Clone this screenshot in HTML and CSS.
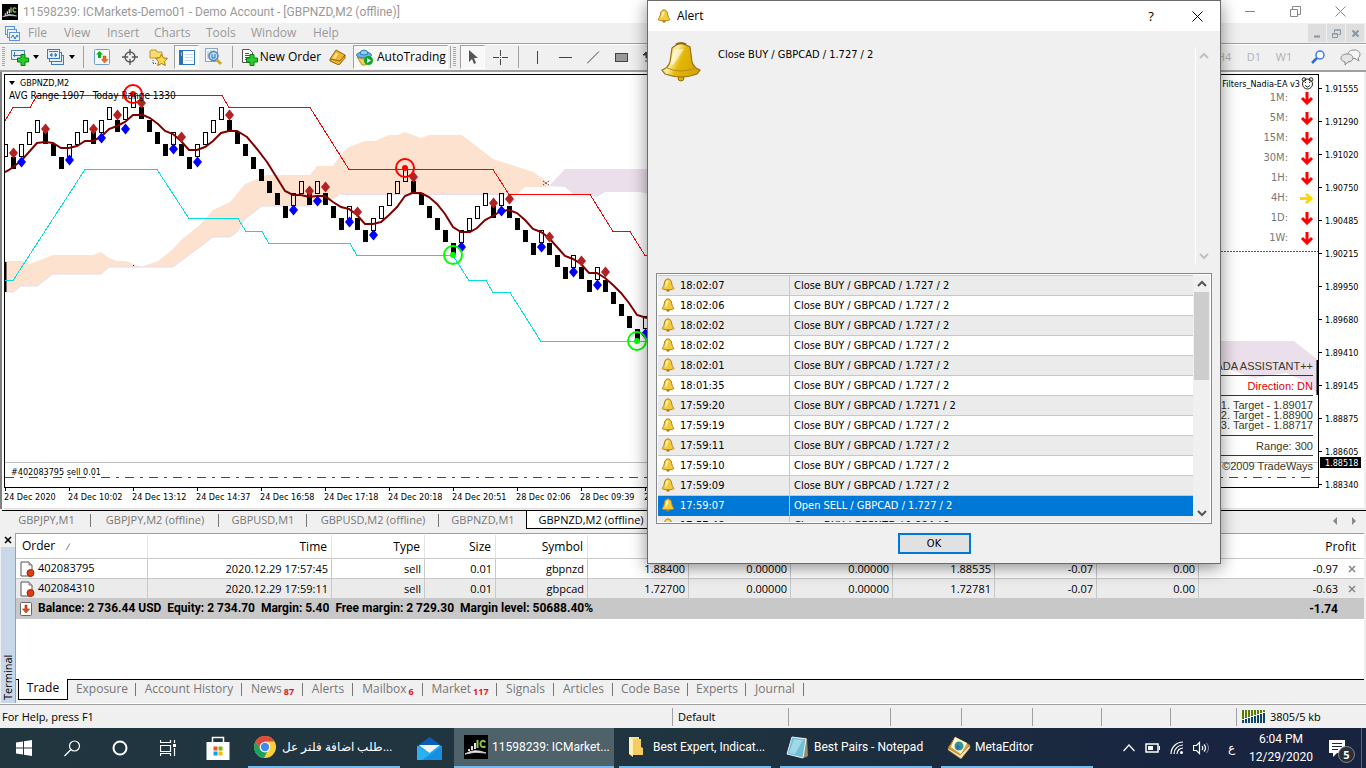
FILE: index.html
```html
<!DOCTYPE html>
<html lang="en">
<head>
<meta charset="utf-8">
<title>ICMarkets-Demo01 - GBPNZD,M2</title>
<link rel="stylesheet" href="styles.css">
</head>
<body>
<svg class="defs" aria-hidden="true">
  <defs>
    <linearGradient id="gold" x1="0" x2="1" y1="0" y2=".4"><stop offset="0" stop-color="#e8c42c"/><stop offset=".4" stop-color="#fbee9c"/><stop offset=".6" stop-color="#e3b708"/><stop offset="1" stop-color="#d9a800"/></linearGradient>
    <symbol id="bell" viewBox="0 0 40 40">
      <circle cx="20" cy="36" r="3" fill="#e0b000" stroke="#8f6a0e"/>
      <path d="M15 3Q20-1 25 3L29 5L31 20Q33 26 39 28L36 32Q20 38 4 32L1 28Q7 26 9 20L11 6Z" fill="url(#gold)" stroke="#9a7112" stroke-width="1.2"/>
      <path d="M6 26Q20 32 34 26" fill="none" stroke="#b88c14"/>
      <path d="M15 2.500Q20 0 25 2.500" fill="none" stroke="#8a620a" stroke-width="2"/>
      <path d="M13 8L23 7L13 22Q9 24 10 20Z" fill="#fff" opacity=".55"/>
    </symbol>
    <symbol id="smallbell" viewBox="0 0 14 14">
      <circle cx="7" cy="12.300" r="1.500" fill="#b07c10"/>
      <path d="M5 1.500Q7 .2 9 1.500Q10.500 2.500 10.800 6Q11 8.500 13 10.500Q12.500 11.800 7 11.800T1 10.500Q3 8.500 3.200 6Q3.500 2.500 5 1.500Z" fill="#f2cc3c" stroke="#b8861c"/>
      <path d="M6.500 2.500Q5 3 4.800 6.500L4 9.500Q6.500 8 7.500 2.500Z" fill="#fff6b8"/>
    </symbol>
    <symbol id="mt" viewBox="0 0 24 24">
      <rect width="24" height="24" fill="#000"/>
      <path d="M4 16v-2h2v2zM7 15v-4h2v4zM10 14V8h2v6z" fill="#ddd"/><path d="M1 19Q10 13 22 18Q11 16 1 19Z" fill="#fff" stroke="#ccc"/>
      <path d="M13.500 5v8M21.500 7q-4.500-3-5 1.500q0 5 5 3" fill="none" stroke="#8bc34a" stroke-width="2"/>
    </symbol>
    <symbol id="doc" viewBox="0 0 16 16">
      <path d="M2 1h8l3 3v11H2z" fill="#fff" stroke="#555"/><path d="M10 1v3h3" fill="#ddd" stroke="#777"/><circle cx="11.500" cy="12" r="3.500" fill="#e03c10" stroke="#a02808"/>
    </symbol>
    <symbol id="plus" viewBox="0 0 12 12"><path d="M4 .5h4V4h3.500v4H8v3.500H4V8H.5V4H4z" fill="#23cf26" stroke="#0a7d12"/></symbol>
    <symbol id="chev" viewBox="0 0 10 8"><path d="M1 6L5 2L9 6" fill="none" stroke="currentColor" stroke-width="2"/></symbol>
  </defs>
</svg>

<header class="titlebar">
  <svg class="i16"><use href="#mt"/></svg>
  <h1 class="title">11598239: ICMarkets-Demo01 - Demo Account - [GBPNZD,M2 (offline)]</h1>
  <div class="winctl">
    <button aria-label="Minimize"><svg width="11" height="11"><path d="M0 5.500h10" /></svg></button>
    <button aria-label="Restore"><svg width="11" height="11"><path d="M.5 3.500h7v7h-7zM2.500 3.500v-3h8v8h-3" /></svg></button>
    <button aria-label="Close"><svg width="11" height="11"><path d="M.5 .5l10 10M10.500 .5l-10 10" /></svg></button>
  </div>
</header>

<nav class="menubar">
  <svg class="i15" viewBox="0 0 15 15"><g fill="#eaf3ff" stroke="#5b93dc"><rect x=".5" y=".5" width="9" height="8"/><rect x="2.500" y="3.500" width="9" height="8"/><rect x="4.500" y="6.500" width="10" height="8"/></g><path d="M6 12l2-3 2 4 2-4 1 2" fill="none" stroke="#2b6cc4"/></svg>
  <button class="m-file">File</button><button class="m-view">View</button><button class="m-insert">Insert</button><button class="m-charts">Charts</button><button class="m-tools">Tools</button><button class="m-window">Window</button><button class="m-help">Help</button>
  <div class="childctl">
    <button aria-label="Minimize chart"><svg width="9" height="9"><path d="M1 7.500h6" stroke-width="2"/></svg></button>
    <button aria-label="Restore chart"><svg width="9" height="9"><path d="M.5 4.500h5v4h-5zM.5 5h5M2.500 3.500v-2.500h6v4.500h-2M2.500 1h6"/></svg></button>
    <button aria-label="Close chart"><svg width="9" height="9"><path d="M1.500 1.500l6 6M7.500 1.500l-6 6" stroke-width="2"/></svg></button>
  </div>
</nav>

<div class="toolbar">
  <span class="grip"></span>
  <button class="drop" aria-label="New chart"><svg width="18" height="17"><rect x=".5" y="1.500" width="13" height="9" fill="#e4f0fb" stroke="#4c86b8"/><path d="M3.500 3v5M2 6.500h9" stroke="#3a74a8" fill="none"/><use href="#plus" x="6" y="5" width="12" height="12"/></svg><span class="caret"></span></button>
  <button class="drop" aria-label="Profiles"><svg width="18" height="17"><g fill="#e4f0fb" stroke="#3f7bb4"><rect x="4.500" y="6.500" width="12" height="9"/><rect x="2.500" y="3.500" width="12" height="9"/><rect x=".5" y=".5" width="12" height="9"/></g><path d="M2 2.500h9M3 6l2-1.500v3zM10 6L8 4.500v3z" stroke="#3f7bb4" fill="#3f7bb4"/></svg><span class="caret"></span></button>
  <span class="sep"></span>
  <button class="tb" aria-label="Market Watch"><svg width="16" height="16"><rect x=".5" y=".5" width="15" height="15" rx="1" fill="#f4f9ff" stroke="#6fa0d0"/><path d="M5.500 2L9 5.500H7V9H4V5.500H2z" fill="#12ad1f"/><path d="M10.500 14L7.500 10.500H9V7h3v3.500h2z" fill="#f06a20" stroke="#b84408" stroke-width=".5"/></svg></button>
  <button class="tb" aria-label="Data Window"><svg width="16" height="16"><g fill="none" stroke="#555" stroke-width="1.300"><circle cx="8" cy="8" r="5"/><path d="M8 0v16M0 8h16"/></g><circle cx="8" cy="8" r="2" fill="#f0f0f0"/></svg></button>
  <button class="tb" aria-label="Navigator"><svg width="19" height="17"><path d="M1 2l1-1h5l1 2h5v6H1z" fill="#f7dc6c" stroke="#b79a34"/><path d="M4 11v4M4 14.500h4" stroke="#555" stroke-dasharray="1 1" fill="none"/><path d="M12.500 5l1.800 3.800 4.200.6-3 3 .8 4.100-3.800-2-3.800 2 .8-4.100-3-3 4.200-.6z" fill="#ffd84a" stroke="#a87c10"/></svg></button>
  <button class="tb on" aria-label="Terminal"><svg width="16" height="15"><rect x=".5" y=".5" width="15" height="14" fill="#fff" stroke="#2e75b5"/><rect x="1" y="1" width="3" height="13" fill="#2a6fb0"/><path d="M2 3h1M2 5h1" stroke="#fff"/><path d="M6 4.500h8M6 7.500h8M6 10.500h8" stroke="#c4dcf2"/></svg></button>
  <button class="tb" aria-label="Strategy Tester"><svg width="18" height="18"><rect x=".5" y=".5" width="12" height="13" fill="#f2f6fb" stroke="#8aa6c0"/><path d="M3 3v8M6 2v4M9 2v3" stroke="#9bb"/><circle cx="8.500" cy="8" r="4.500" fill="#bfe0fb" stroke="#4d84b8" stroke-width="1.500"/><path d="M7 6v4h3V6" fill="none" stroke="#2c6cae"/><path d="M12 12l4 4" stroke="#dba528" stroke-width="3"/></svg></button>
  <span class="sep"></span>
  <button class="order"><svg width="17" height="18"><path d="M1.500 1.500h7l3 3v10h-10z" fill="#fff" stroke="#555"/><path d="M4 5.500h4M4 7.500h5M4 9.500h5M4 11.500h2" stroke="#555"/><use href="#plus" x="5" y="6" width="12" height="12"/></svg><span>New Order</span></button>
  <button class="tb" aria-label="MetaEditor"><svg width="17" height="16"><path d="M1 10L7 1l9 5-5 9z" fill="#f0b52e" stroke="#93640f"/><path d="M1 10v2l9 4 6-7V6l-5 6z" fill="#f0b52e" stroke="#93640f"/><path d="M4 9l3-5 2 1-3 5z" fill="#ffe69a"/></svg></button>
  <button class="auto on"><svg width="18" height="17"><path d="M1 8q7 4 14 0l-5 8H6z" fill="#f4cf4c" stroke="#b8902a"/><ellipse cx="8" cy="6" rx="7.500" ry="3" fill="#67b4e6" stroke="#2f7fb5"/><path d="M4 5q0-4 4-4t4 4q-4 2-8 0z" fill="#8fcff4" stroke="#2f7fb5"/><circle cx="12.500" cy="11.500" r="4.500" fill="#0ba526"/><path d="M11 9l4 2.500-4 2.500z" fill="#fff"/></svg><span>AutoTrading</span></button>
  <span class="sep tight"></span><span class="grip"></span>
  <button class="tb on" aria-label="Cursor"><svg width="12" height="16"><path d="M2 1v12l3-3 2 5 2-1-2-5h4z" fill="#555"/></svg></button>
  <button class="tb" aria-label="Crosshair"><svg width="15" height="15"><path d="M7.500 0v6M7.500 9v6M0 7.500h6M9 7.500h6M7 7.500h1" stroke="#444"/></svg></button>
  <span class="sep"></span>
  <button class="tb" aria-label="Vertical line"><svg width="13" height="13"><path d="M6.500 0v13" stroke="#444"/></svg></button>
  <button class="tb" aria-label="Horizontal line"><svg width="13" height="13"><path d="M0 6.500h13" stroke="#444"/></svg></button>
  <button class="tb" aria-label="Trendline"><svg width="13" height="13"><path d="M0 12.500L12 .5" stroke="#444"/></svg></button>
  <button class="tb" aria-label="Rectangle"><svg width="13" height="13"><rect x=".5" y="2.500" width="12" height="8" fill="#999" stroke="#444"/></svg></button>
  <button class="tb" aria-label="Arrows"><svg width="13" height="13"><path d="M0 4l3-3 3 3zM3 4v3h4M2 10h9" stroke="#444" fill="#444"/></svg></button>
  <div class="periods"><button>H4</button><button>D1</button><button>W1</button>
    <button aria-label="Search"><svg width="14" height="14"><path d="M6 8l-5 5" stroke="#2a6cd8" stroke-width="2.500"/><circle cx="9" cy="5" r="4" fill="#fff" stroke="#3a7ae0" stroke-width="1.500"/></svg></button>
    <button aria-label="Community"><svg width="21" height="16"><path d="M14 1c4 0 6 2 6 4.500S18 9 18 9l1 3-4-2.500C10 10 8 8 8 5.500S10 1 14 1z" fill="#f6f6f6" stroke="#888"/><path d="M7 5c4 0 6 2 6 4s-2 4-5 4l-3 3v-3C2 12 1 11 1 9s2-4 6-4z" fill="#e4e4e4" stroke="#888"/></svg></button>
  </div>
</div>

<main class="chart">
  <div class="plot">
    <svg class="graph" id="graph" viewBox="5 75 1313 412" preserveAspectRatio="xMinYMin slice" role="img" aria-label="GBPNZD M2 price chart">
      <path d="M5 261L23 261L30 264L53 255L93 255L101 252L109 258L117 261L126 261L141 267L158 261L173 249L181 240L200 225L213 210L230 202L245 184L267 175L310 175L317 166L333 166L341 154L349 147L365 141L375 141L389 135L398 135L405 132L421 138L429 135L462 135L493 159L509 164L533 172L545 180L549 187L525 187L517 194L341 194L333 199L310 206L262 206L245 219L237 232L230 237L213 237L173 267L109 267L101 274L53 274L37 286L21 286L13 292L5 292Z" fill="#fce2cf"/>
      <path d="M549 186L565 169H660V194H648L640 192H605L597 197L589 194H573L565 187Z" fill="#eadfea"/>
      <path d="M5 292H13L21 286H37L53 274H101L109 267H173L213 237H230L237 232L245 219L262 206H310M341 194.500H517" fill="none" stroke="#e6dcec"/>
      <path d="M1200 341H1294L1318 360V394L1302 380L1286 373L1254 378L1220 366H1200Z" fill="#eadfea"/>
      <path d="M1200 251.500H1318" stroke="#555" stroke-dasharray="2 1"/>
      <path d="M5 462.500H1318" stroke="#c0c0c0"/>
      <path d="M5 477.500H1318" stroke="#008000" stroke-dasharray="9 6 3 6"/>
      <path d="M5.500 262V292M1317.500 360V395" stroke="#000" stroke-width="2"/>
      <g id="candles" shape-rendering="crispEdges"></g>
      <path d="M5 280.500H13L85 169.500H157L189 218.500H238L246 231.500H262L269 243.500H350L357 255.500H453L469 280.500H486L493 292.500H510L541 341.500H660" class="low"/>
      <path d="M5 121L13 107.500H30L37 95.500H222L229 107.500H310L349 169.500H493L509 194.500H590L613 231.500H630L645 255.500H660" class="high"/>
      <path d="M5 172L9 170L21 161L37 143L45 142L53 143L61 148L69 148L77 146L85 141L93 141L101 137L109 129L117 126L125 122L133 115L143 115L150 118L158 124L165 131L173 134L181 141L189 150L197 150L205 147L213 141L221 133L229 131L237 131L247 137L257 149L267 162L277 178L285 191L293 195L301 195L309 197L317 196L325 196L333 202L341 207L349 209L357 215L365 224L373 224L381 222L389 215L397 207L405 196L412 193L421 193L429 197L437 204L445 214L453 227L461 232L470 232L477 228L485 220L493 216L501 211L509 210L517 213L525 220L533 229L541 232L549 238L557 247L565 256L573 259L581 264L589 273L597 273L605 278L613 285L621 293L629 303L637 315L647 318L660 319" class="ma"/>
      <g id="marks"></g>
      <path d="M133.500 265v2M543 181l6 4M549 181l-6 4" stroke="#222" stroke-dasharray="1 1"/>
    </svg>
    <div class="plotinfo"><p><span class="caret"></span>GBPNZD,M2</p><p class="range"><span>AVG Range 1907</span><span>Today Range 1330</span></p></div>
    <p class="trade">#402083795 sell 0.01</p>
    <div class="signals">
      <p class="ea">Filters_Nadia-EA v3 <svg width="13" height="13"><g fill="none" stroke="#222"><circle cx="6.500" cy="7" r="5"/><circle cx="3" cy="2.500" r="1.800"/><circle cx="10" cy="2.500" r="1.800"/><path d="M4 5.500h1M8 5.500h1M4 8.500q2.500 3 5 0"/></g></svg></p>
      <dl id="signals"></dl>
    </div>
    <div class="assist">
      <p>WADA ASSISTANT++</p><p class="dn">Direction: DN</p>
      <ul><li>1. Target - 1.89017</li><li>2. Target - 1.88900</li><li>3. Target - 1.88717</li></ul>
      <p>Range: 300</p><p>©2009 TradeWays</p>
    </div>
  </div>
  <ol class="prices"><li>1.91555</li><li>1.91290</li><li>1.91020</li><li>1.90750</li><li>1.90485</li><li>1.90215</li><li>1.89950</li><li>1.89680</li><li>1.89410</li><li>1.89145</li><li>1.88875</li><li>1.88605</li><li>1.88340</li><li class="bid">1.88518</li></ol>
  <ol class="times"><li>24 Dec 2020</li><li>24 Dec 10:02</li><li>24 Dec 13:12</li><li>24 Dec 14:37</li><li>24 Dec 16:58</li><li>24 Dec 17:18</li><li>24 Dec 20:18</li><li>24 Dec 20:51</li><li>28 Dec 02:06</li><li>28 Dec 09:39</li><li>28 Dec</li></ol>
</main>

<nav class="charttabs">
  <button class="c1">GBPJPY,M1</button><button class="c2">GBPJPY,M2 (offline)</button><button class="c3">GBPUSD,M1</button><button class="c4">GBPUSD,M2 (offline)</button><button class="c5">GBPNZD,M1</button><button class="active">GBPNZD,M2 (offline)</button>
  <span class="arrows"><button aria-label="Scroll left"><svg width="5" height="8"><path d="M4 0v8L0 4z"/></svg></button><button aria-label="Scroll right"><svg width="5" height="8"><path d="M0 0v8l4-4z"/></svg></button></span>
</nav>

<section class="terminal">
  <aside class="side"><button aria-label="Close terminal"><svg width="8" height="8"><path d="M1 1l6 6M7 1l-6 6" stroke="#000" stroke-width="1.600"/></svg></button><h2>Terminal</h2></aside>
  <div class="panel">
    <table class="orders">
      <colgroup><col class="w-order"><col class="w-time"><col class="w-type"><col class="w-size"><col class="w-sym"><col class="w-price"><col class="w-num"><col class="w-num"><col class="w-num"><col class="w-num"><col class="w-num"><col></colgroup>
      <thead><tr><th>Order <i class="sort">∕</i></th><th>Time</th><th>Type</th><th>Size</th><th>Symbol</th><th></th><th></th><th></th><th></th><th></th><th></th><th class="profit">Profit</th></tr></thead>
      <tbody>
        <tr><td><svg class="i16"><use href="#doc"/></svg>402083795</td><td>2020.12.29 17:57:45</td><td>sell</td><td>0.01</td><td>gbpnzd</td><td>1.88400</td><td>0.00000</td><td>0.00000</td><td>1.88535</td><td>-0.07</td><td>0.00</td><td class="profit">-0.97<button aria-label="Close order 402083795"><svg width="8" height="8"><path d="M1 1l6 6M7 1l-6 6"/></svg></button></td></tr>
        <tr><td><svg class="i16"><use href="#doc"/></svg>402084310</td><td>2020.12.29 17:59:11</td><td>sell</td><td>0.01</td><td>gbpcad</td><td>1.72700</td><td>0.00000</td><td>0.00000</td><td>1.72781</td><td>-0.07</td><td>0.00</td><td class="profit">-0.63<button aria-label="Close order 402084310"><svg width="8" height="8"><path d="M1 1l6 6M7 1l-6 6"/></svg></button></td></tr>
      </tbody>
      <tfoot><tr><td colspan="11"><svg class="i16" viewBox="0 0 16 16"><rect x="1.500" y="1.500" width="11" height="13" rx="1" fill="#fff" stroke="#666"/><path d="M6 4h2v4h2.500L7 12 3.500 8H6z" fill="#e84a18" stroke="#a82c08" stroke-width=".6"/></svg><span>Balance: 2 736.44 USD</span><span>Equity: 2 734.70</span><span>Margin: 5.40</span><span>Free margin: 2 729.30</span><span>Margin level: 50688.40%</span></td><td class="profit">-1.74</td></tr></tfoot>
    </table>
    <nav class="tabs">
      <button class="active">Trade</button><button class="t1">Exposure</button><button class="t2">Account History</button><button class="t3">News<sub>87</sub></button><button class="t4">Alerts</button><button class="t5">Mailbox<sub>6</sub></button><button class="t6">Market<sub>117</sub></button><button class="t7">Signals</button><button class="t8">Articles</button><button class="t9">Code Base</button><button class="t10">Experts</button><button class="t11">Journal</button>
    </nav>
  </div>
</section>

<footer class="status"><span class="help">For Help, press F1</span><span class="s1">Default</span><span class="s2"></span><span class="s3"></span><span class="s3"></span><span class="s4"></span><span class="s4"></span><span class="s5"></span>
  <span class="net"><svg width="24" height="13" id="bars" aria-hidden="true"></svg>3805/5 kb</span></footer>

<footer class="taskbar">
  <button class="launch" aria-label="Start"><svg width="16" height="16"><path d="M0 2.500l7-1v6H0zM8 1.300L16 0v7.500H8zM0 8.500h7v6l-7-1zM8 8.500h8V16l-8-1.200z" fill="#fff"/></svg></button>
  <button class="launch" aria-label="Search"><svg width="17" height="17"><circle cx="10.500" cy="6" r="5" class="ln"/><path d="M7 9.500L.5 16" class="ln"/></svg></button>
  <button class="launch" aria-label="Cortana"><svg width="16" height="16"><circle cx="8" cy="8" r="6.500" fill="none" stroke="#fff" stroke-width="2"/></svg></button>
  <button class="launch" aria-label="Task View"><svg width="16" height="16"><path d="M.5 0v2.500h10V0M.5 5.500h10v6H.5zM.5 16v-2.500h10V16M14.500 0v3M14.500 8v8" class="ln"/><path d="M13 4h3v3h-3z" fill="#fff"/></svg></button>
  <button class="launch store" aria-label="Store"><svg width="24" height="25"><path d="M6.500 8V1.500h11V8" fill="none" stroke="#fff" stroke-width="1.500"/><path d="M.5 6h23v18H.5z" fill="#fff"/><path d="M7.500 10.500h4v4h-4z" fill="#f25022"/><path d="M12.500 10.500h4v4h-4z" fill="#7fba00"/><path d="M7.500 15.500h4v4h-4z" fill="#00a4ef"/><path d="M12.500 15.500h4v4h-4z" fill="#ffb900"/></svg></button>
  <button class="task chrome"><svg width="22" height="22" viewBox="0 0 22 22"><circle cx="11" cy="11" r="11" fill="#fdd03b"/><path d="M11 0A11 11 0 0 1 20.500 5.500H11L6.200 13.700 1.500 5.500A11 11 0 0 1 11 0z" fill="#dd4b3e"/><path d="M1.500 5.500L6.200 13.700 11 16.500 13 16 10 22A11 11 0 0 1 1.500 5.500z" fill="#1aa260"/><circle cx="11" cy="11" r="5.300" fill="#fff"/><circle cx="11" cy="11" r="4.200" fill="#4587f3"/></svg><span lang="ar" dir="ltr">طلب اضافة فلتر عل...</span></button>
  <button class="launch mail" aria-label="Mail"><svg width="25" height="23"><path d="M0 9L12.500 0 25 9z" fill="#0a5eb4"/><path d="M0 9h25v14H0z" fill="#28a8ea"/><path d="M2 8h21l-10.500 8z" fill="#f4f4f4"/><path d="M0 9l12.500 8L25 9v14H0z" fill="#2bb0f0"/><path d="M25 9L5 23h20z" fill="#1590e0"/></svg></button>
  <button class="task current"><svg width="24" height="24"><use href="#mt"/></svg><span>11598239: ICMarket...</span></button>
  <button class="task folder"><svg width="24" height="22"><path d="M4 1h10v17H4z" fill="#ffe08a"/><path d="M4 1l4 3v17l-4-3z" fill="#fff0b8"/><path d="M8 3h8v8l2 1v7H8z" fill="#f5cc62"/></svg><span>Best Expert, Indicat...</span></button>
  <button class="task"><svg width="23" height="23"><path d="M7 1l14 1 1 18-4 2z" fill="#9c8a6c"/><path d="M6 1l14 2-3 19-16-4z" fill="#6fc0d6" stroke="#e8f4f8"/><path d="M8 3l9 1-8 14-6-1z" fill="#b5e2ee" opacity=".7"/></svg><span>Best Pairs - Notepad</span></button>
  <button class="task editor"><svg width="25" height="23"><path d="M1 12L8 1l15 8-9 13z" fill="#d8a63c" stroke="#8c6418"/><path d="M4 11L8 1l12 6-6 11z" fill="#fff6dc"/><circle cx="12" cy="10" r="4.500" fill="#2f9a8c"/><path d="M10 8l4 4-5 1z" fill="#3465c0"/><path d="M1 12l12 7 10-10v3L14 23 1 14z" fill="#f4e2b0" stroke="#8c6418" stroke-width=".6"/></svg><span>MetaEditor</span></button>
  <div class="tray">
    <button aria-label="Hidden icons"><svg width="12" height="8"><path d="M.5 7L6 1l5.500 6" class="ln"/></svg></button>
    <button aria-label="Battery"><svg width="16" height="10"><path d="M1 1h12v8H1z" fill="none" stroke="#fff" stroke-width="1.500"/><path d="M3 3h5v4H3zM14 3h1v4h-1z" fill="#fff"/></svg></button>
    <button aria-label="Network"><svg width="14" height="14"><path d="M1 13A12 12 0 0 1 13 1M4 13A9 9 0 0 1 13 4M7 13A6 6 0 0 1 13 7" class="ln"/><circle cx="11.500" cy="11.500" r="1.500" fill="#fff"/></svg></button>
    <button aria-label="Volume"><svg width="17" height="14"><path d="M.5 4.500h3l3-3v11l-3-3h-3zM9 5q1.500 2 0 4M11 3.500q3 3.500 0 7" class="ln"/><path d="M13.500 2q4 5 0 10" fill="none" stroke="#889"/></svg></button>
    <button class="lang" lang="ar">ع</button>
    <button class="clock"><span>6:04 PM</span><span>12/29/2020</span></button>
    <button class="notes" aria-label="Notifications"><svg width="17" height="17"><path d="M0 0h16v13h-8l-4 4v-4H0z" fill="#fff"/><path d="M3 3.500h10M3 6.500h10M3 9.500h6" stroke="#1b2840"/></svg><b>5</b></button>
  </div>
</footer>

<section class="dialog" role="dialog" aria-labelledby="dlgtitle">
  <header><svg class="i14"><use href="#smallbell"/></svg><h2 id="dlgtitle">Alert</h2><button aria-label="Help">?</button><button aria-label="Close alert"><svg width="11" height="11"><path d="M.5 .5l10 10M10.500 .5l-10 10" stroke="#000"/></svg></button></header>
  <div class="message"><svg class="bigbell"><use href="#bell"/></svg><textarea readonly aria-label="Alert message">Close BUY / GBPCAD / 1.727 / 2</textarea><div class="scroll ghost"><svg><use href="#chev"/></svg><svg class="down"><use href="#chev"/></svg></div></div>
  <div class="log"><div class="rows"><table><tbody id="log"></tbody></table></div><div class="scroll"><svg><use href="#chev"/></svg><span class="thumb"></span><svg class="down"><use href="#chev"/></svg></div></div>
  <button class="ok">OK</button>
</section>
<script src="app.js"></script>
</body>
</html>
```
FILE: app.js
```js
// Renko bricks, eight pixels apart: W rises, B falls, the number is the row.
const bricks = 'W4 B5 W4 W3 W2 B3 B4 B5 W4 W3 W2 B3 W2 W1 B2 W1 W0 B1 B2 B3 B4 W3 B4 B5 W4 W3 W2 W1 B2 B3 B4 B5 B6 B7 B8 B9 W8 W7 B8 W7 B8 B9 B10 W9 B10 B11 W10 W9 W8 W7 W6 B7 B8 B9 B10 B11 B12 W11 W10 W9 W8 B9 W8 B9 B10 B11 B12 W11 B12 B13 B14 W13 B14 B15 W14 B15 B16 B17 B18 B19 W18';
document.getElementById('candles').innerHTML = bricks.split(' ').map((b, i) => {
  const row = Number(b.slice(1));
  const x = 3 + 8 * i;
  const y = Math.round(95 + 12.3 * row);
  return b[0] === 'B'
    ? `<rect x="${x}" y="${y}" width="5" height="12" fill="#000"/>`
    : `<rect x="${x + .5}" y="${y + .5}" width="4" height="12" fill="none" stroke="#000"/>`;
}).join('');

const diamond = (fill) => ([i, y]) => `<path d="M${5.5 + 8 * i} ${y - 5.5}l4.500 5.500l-4.500 5.500l-4.500 -5.500z" fill="${fill}"/>`;
const sells = [[1,153],[5,129],[11,129],[14,115],[17,103],[22,137],[28,115],[38,191],[40,187],[44,212],[51,177],[61,203],[63,199],[68,237],[72,261],[75,272]];
const buys = [[2,162],[8,160],[12,138],[15,129],[21,149],[24,162],[36,210],[39,201],[43,222],[46,235],[57,247],[62,211],[67,247],[71,272],[74,285],[80,334]];
const rings = [[133,94,'#f00'],[405,168,'#f00'],[453,255,'#0f0'],[637,341,'#0f0']];
document.getElementById('marks').innerHTML =
  sells.map(diamond('#b22222')).join('') + buys.map(diamond('#00f')).join('') +
  rings.map(([x, y, c]) => `<circle cx="${x}" cy="${y}" r="9" fill="none" stroke="${c}" stroke-width="2"/><circle cx="${x}" cy="${y}" r="3" fill="${c}"/>`).join('');

document.getElementById('signals').innerHTML = ['1M', '5M', '15M', '30M', '1H', '4H', '1D', '1W'].map((t) =>
  `<div><dt>${t}:</dt><dd><svg width="14" height="13" viewBox="0 0 14 13"><path d="${t === '4H'
    ? 'M0 6.500h10M6 2l5 4.500L6 11' : 'M7 0v10M2 6L7 11l5-5'}" fill="none" stroke="${t === '4H' ? '#ffd500' : '#f00'}" stroke-width="3"/></svg></dd></div>`).join('');

document.getElementById('bars').innerHTML = Array.from({ length: 8 }, (_, i) =>
  `<rect x="${i * 3}" y="0" width="2" height="${9 - i}" fill="#5c7a08"/><rect x="${i * 3}" y="${10 - i}" width="2" height="${3 + i}" fill="#0a4468"/>`).join('');

const log = [['18:02:07'], ['18:02:06'], ['18:02:02'], ['18:02:02'], ['18:02:01'], ['18:01:35'],
  ['17:59:20', 'Close BUY / GBPCAD / 1.7271 / 2'], ['17:59:19'], ['17:59:11'], ['17:59:10'], ['17:59:09'],
  ['17:59:07', 'Open SELL / GBPCAD / 1.727 / 2'], ['17:57:48', 'Close BUY / GBPNZD / 1.884 / 2']];
document.getElementById('log').innerHTML = log.map(([time, text = 'Close BUY / GBPCAD / 1.727 / 2'], i) =>
  `<tr${i === 11 ? ' class="selected"' : ''}><td><svg><use href="#smallbell"/></svg>${time}</td><td>${text}</td></tr>`).join('');
```
FILE: styles.css
```css
* { box-sizing: border-box; }
html, body { height: 100%; }
body { margin: 0; display: flex; flex-direction: column; min-height: 768px; position: relative; overflow: hidden; background: #f0f0f0; color: #000; font: 12px/16px "Open Sans", "Noto Sans", sans-serif; }
h1, h2, p, ol, ul, dl, dd { margin: 0; padding: 0; font: inherit; list-style: none; }
button { border: 0; padding: 0; margin: 0; background: none; color: inherit; font: inherit; display: flex; align-items: center; justify-content: center; white-space: nowrap; }
svg { flex: none; display: block; }
.defs { position: absolute; width: 0; height: 0; }
.i16 { width: 16px; height: 16px; }
.i15 { width: 15px; height: 15px; }
.i14 { width: 14px; height: 14px; }
.caret { flex: none; width: 0; height: 0; border: 3px solid transparent; border-top: 4px solid #000; border-bottom: 0; }

.titlebar { height: 23px; flex: none; display: flex; align-items: center; padding-left: 2px; gap: 5px; background: #fff; color: #999; font-family: Roboto, "Open Sans", sans-serif; }
.winctl { margin-left: auto; display: flex; padding-right: 3px; }
.winctl button { width: 45px; height: 21px; }
.winctl path { fill: none; stroke: #888; }

.menubar { height: 20px; flex: none; display: flex; align-items: center; padding-left: 5px; color: #999; }
.menubar > button { justify-content: flex-start; }
.menubar .m-file { width: 36px; margin-left: 8px; }
.m-view { width: 43px; } .m-insert { width: 47px; } .m-charts { width: 52px; } .m-tools { width: 45px; } .m-window { width: 62px; }
.childctl { margin-left: auto; display: flex; gap: 1px; padding-right: 2px; }
.childctl button { width: 18px; height: 18px; background: #dedede; }
.childctl path { fill: none; stroke: #8496a8; }

.toolbar { height: 29px; flex: none; display: flex; align-items: center; border-top: 1px solid #a0a0a0; border-bottom: 2px solid #a0a0a0; box-shadow: inset 0 1px #fff; }
.grip { width: 3px; height: 20px; margin: 0 2px; background: repeating-linear-gradient(#a8a8a8 0 1px, #f0f0f0 1px 2px); }
.drop { width: 36px; gap: 4px; height: 24px; }
.sep { width: 1px; height: 22px; margin: 0 4px; background: #a0a0a0; }
.sep.tight { margin: 0 0 0 2px; }
.tb { width: 28px; height: 24px; }
.on { border: 1px solid; border-color: #a0a0a0 #fff #fff #a0a0a0; background: #f8f8f8; }
.tb.on { width: 25px; margin: 0 1px 0 2px; }
.order { gap: 2px; width: 84px; margin-left: 2px; }
.auto { width: 95px; height: 24px; gap: 3px; justify-content: flex-start; padding-left: 2px; margin-left: 2px; }
.periods { margin-left: auto; display: flex; color: #b0b0b0; font-size: 11px; }
.periods button { width: 30px; height: 24px; }
.periods button:nth-child(4) { width: 38px; }
.periods button:nth-child(5) { width: 26px; margin-right: 3px; }

.chart { flex: 1; min-height: 0; display: grid; grid-template: minmax(0, 1fr) 21px / minmax(0, 1fr) 45px; margin-right: 2px; border-left: 2px solid #808080; background: #fff; padding: 2px 0 0 2px; font: 9px/12px "DejaVu Sans Condensed", "DejaVu Sans", sans-serif; }
.plot { position: relative; border: 1px solid #000; overflow: hidden; }
.graph { width: 100%; height: 100%; }
.high, .low, .ma { fill: none; stroke: #f00; stroke-width: 1; shape-rendering: crispEdges; }
.low { stroke: #00e0e0; }
.ma { stroke: #800000; stroke-width: 2; shape-rendering: auto; }
.plotinfo { position: absolute; left: 4px; top: 1px; }
.plotinfo p { display: flex; align-items: center; gap: 5px; height: 13px; }
.plotinfo .range { gap: 8px; font-size: 10px; }
.trade { position: absolute; left: 6px; bottom: 9px; }
.signals { position: absolute; right: 0; top: 2px; width: 110px; }
.ea { display: flex; justify-content: flex-end; align-items: center; gap: 1px; padding-right: 4px; height: 13px; white-space: nowrap; }
.signals dl { font-size: 11px; color: #777; }
.signals dl div { display: flex; justify-content: flex-end; align-items: center; height: 20px; gap: 12px; padding-right: 4px; }
.signals dl div:first-child { margin-top: -2px; }
.assist { position: absolute; right: 5px; top: 281px; width: 112px; text-align: right; color: #403820; font: 11px/20px "Liberation Sans", Arial, sans-serif; white-space: nowrap; }
.assist p:nth-of-type(1), .assist .dn, .assist ul { border-bottom: 1px solid #403820; }
.assist .dn { color: #e00000; }
.assist ul { padding: 4px 0 5px; line-height: 10px; }
.assist p:nth-of-type(3) { border-bottom: 1px solid #403820; }
.assist p { height: 20px; }
.prices { position: relative; margin-top: -2px; }
.prices li { height: 33px; display: flex; align-items: center; gap: 3px; }
.prices li::before { content: ""; width: 3px; height: 1px; background: #000; }
.prices .bid { position: absolute; left: 1px; top: 385px; height: 11px; width: 41px; padding-left: 5px; background: #000; color: #fff; }
.prices .bid::before { display: none; }
.times { grid-column: 1 / -1; display: flex; overflow: hidden; border-bottom: 1px solid #e0e0e0; }
.times li { flex: none; width: 64px; white-space: nowrap; }
.times li::before { content: ""; display: block; width: 1px; height: 3px; margin-left: 1px; background: #000; }

.charttabs { height: 20px; flex: none; display: flex; margin-left: 2px; margin-top: 1px; border-top: 1px solid #000; color: #777; font-size: 11px; }
.charttabs > button { position: relative; height: 18px; }
.charttabs > button:not(.active)::after, .tabs > button:not(.active)::after { content: ""; position: absolute; right: 0; top: 3px; width: 1px; height: 13px; background: #777; }
.c1 { width: 89px; } .c2 { width: 128px; } .c3 { width: 88px; } .c4 { width: 132px; } .c5 { width: 88px; }
.charttabs .active { background: #fff; color: #000; border: 1px solid #000; border-top: 0; width: 130px; margin-left: -1px; }
.arrows { margin-left: auto; display: flex; gap: 14px; padding-right: 9px; fill: #888; }

.terminal { height: 171px; flex: none; margin-top: 3px; display: flex; border-bottom: 1px solid #fff; }
.side { width: 15px; display: flex; flex-direction: column; align-items: center; }
.side button { height: 14px; }
.side h2 { flex: 1; width: 14px; margin-left: 1px; writing-mode: vertical-rl; transform: rotate(180deg); background: #c9d8e8; font-size: 11px; line-height: 14px; padding-top: 3px; }
.panel { flex: 1; min-width: 0; margin-right: 2px; display: flex; flex-direction: column; background: linear-gradient(#fff, #fff) 0 0 / 100% 145px no-repeat; border: 1px solid #a0a0a0; border-width: 1px 0 0 1px; }
.orders { width: 100%; table-layout: fixed; border-collapse: separate; border-spacing: 0; font-size: 11px; text-align: right; margin-top: 1px; }
.orders th, .orders td { padding: 0 3px; overflow: hidden; white-space: nowrap; border-right: 1px solid #c8c8c8; }
.orders th { height: 24px; font-weight: 400; font-size: 12px; padding: 0 4px; border-bottom: 1px solid #c8c8c8; border-right-color: #e4e4e4; }
.orders td { height: 20px; border-bottom: 1px solid #c8c8c8; }
.orders th:first-child, .orders td:first-child { text-align: left; }
.orders th:first-child { padding-left: 6px; }
.sort { margin-left: 8px; font-size: 9px; color: #555; }
.orders svg.i16 { display: inline-block; vertical-align: middle; margin-right: 3px; }
.orders tbody tr:nth-child(2) { background: #ebebeb; }
.orders tfoot { background: #c8c8c8; font: 700 12px/16px Roboto, "Open Sans", sans-serif; }
.orders tfoot td, .orders .profit { border-right: 0; }
.orders .profit { padding-right: 26px; position: relative; }
.orders th.profit { padding-right: 8px; }
.profit button { position: absolute; right: 8px; top: 6px; }
.profit path { stroke: #888; stroke-width: 1.6px; }
.orders tfoot span { margin-right: 6px; }
.w-order { width: 132px; } .w-time { width: 184px; } .w-type { width: 93px; } .w-size { width: 71px; } .w-sym { width: 92px; } .w-price { width: 101px; } .w-num { width: 102px; }
.tabs { margin-top: auto; height: 24px; display: flex; border-top: 1px solid #000; color: #777; padding-left: 2px; }
.tabs > button { position: relative; height: 20px; padding-bottom: 2px; }
.tabs .active { width: 50px; margin-top: -1px; height: 21px; border: 1px solid #000; border-top: 0; background: #fff; color: #000; }
.tabs sub { color: #e81123; font-size: 9px; font-weight: 700; vertical-align: baseline; align-self: flex-end; line-height: 12px; margin-left: 2px; }
.t1 { width: 68px; } .t2 { width: 106px; } .t3 { width: 61px; } .t4 { width: 50px; } .t5 { width: 70px; } .t6 { width: 74px; } .t7 { width: 57px; } .t8 { width: 59px; } .t9 { width: 75px; } .t10 { width: 58px; } .t11 { width: 58px; }

.status { height: 24px; flex: none; display: flex; align-items: center; border-top: 1px solid #a0a0a0; font-size: 11px; padding-right: 2px; }
.status .help { flex: 1; padding-left: 2px; }
.status > span:not(.help) { height: 18px; border-left: 1px solid #a0a0a0; padding-left: 5px; display: flex; align-items: center; gap: 4px; }
.s1 { width: 116px; } .s2 { width: 102px; } .s3 { width: 71px; } .s4 { width: 69px; } .s5 { width: 66px; } .net { width: 128px; }

.taskbar { height: 40px; flex: none; display: flex; background: linear-gradient(90deg, #21363f, #20343f 50%, #182540 85%, #182340); color: #fff; font-family: Roboto, "Noto Sans", sans-serif; }
.launch { width: 48px; }
.store { width: 52px; margin-right: 4px; }
.mail { width: 54px; padding-left: 4px; }
.task { width: 152px; margin-right: 9px; padding: 0 6px; gap: 5px; justify-content: flex-start; border-bottom: 2px solid #76b9ed; }
.chrome { margin-right: 0; gap: 6px; }
.current { width: 160px; margin-right: 5px; padding-left: 10px; gap: 4px; background: #4f6269; }
.folder { gap: 4px; }
.editor { gap: 3px; }
.ln { fill: none; stroke: #fff; stroke-width: 1.2px; }
.tray { margin-left: auto; display: flex; border-right: 1px solid #56627a; margin-right: 4px; }
.tray button { width: 24px; }
.tray .lang { width: 36px; }
.tray .clock { width: 64px; flex-direction: column; }
.tray .clock span { line-height: 18px; }
.tray .notes { width: 48px; position: relative; }
.notes b { position: absolute; left: 25px; top: 18px; width: 17px; height: 17px; border: 1px solid #888; border-radius: 50%; background: #2b2f38; font: 700 11px/15px "Open Sans", sans-serif; }

.dialog { position: absolute; left: 647px; top: 0; width: 574px; height: 564px; display: flex; flex-direction: column; background: #f0f0f0; border: 1px solid #6b6b6b; box-shadow: 0 4px 16px rgba(0, 0, 0, .45); font: 11px/14px "DejaVu Sans Condensed", "DejaVu Sans", sans-serif; }
.dialog > header { height: 30px; flex: none; display: flex; align-items: center; padding-left: 9px; gap: 6px; background: #fff; font: 12px/16px "Open Sans", sans-serif; }
.dialog header h2 { margin-right: auto; }
.dialog header button { width: 40px; height: 28px; font-size: 13px; }
.dialog header button:last-child { margin-right: 3px; }
.message { flex: 1; min-height: 0; display: flex; padding: 11px 8px 8px 13px; }
.bigbell { width: 40px; height: 40px; }
.message textarea { flex: 1; resize: none; overflow: hidden; border: 0; outline: 0; margin-left: 15px; padding: 6px 2px; background: none; font: inherit; color: #000; }
.scroll { width: 17px; background: #f0f0f0; display: flex; flex-direction: column; align-items: center; padding: 5px 0; color: #555; }
.scroll svg { width: 10px; height: 8px; }
.scroll .down { margin-top: auto; transform: rotate(180deg); }
.scroll.ghost { color: #c0c0c0; border-left: 1px solid #fff; margin-top: 5px; }
.log { height: 251px; margin: 0 8px; display: flex; flex: none; border: 1px solid #828790; padding: 1px; background: #fff; }
.rows { flex: 1; overflow: hidden; border-top: 1px solid #c8c8c8; }
.rows table { width: 100%; table-layout: fixed; border-spacing: 0; }
.rows td { height: 20px; padding: 0 4px; border-bottom: 1px solid #c8c8c8; white-space: nowrap; }
.rows td:first-child { width: 132px; padding-left: 3px; border-right: 1px solid #c8c8c8; }
.rows svg { display: inline-block; width: 14px; height: 14px; vertical-align: middle; margin-right: 5px; margin-top: -2px; }
.rows tr:nth-child(odd) { background: #ebebeb; }
.rows .selected { background: #0078d7 !important; color: #fff; }
.rows .selected td { border-bottom-color: #0078d7; }
.thumb { width: 15px; height: 88px; margin-top: 4px; background: #cdcdcd; }
.ok { width: 73px; height: 21px; flex: none; margin: 9px auto; border: 2px solid #0078d7; background: #e1e1e1; }
```
